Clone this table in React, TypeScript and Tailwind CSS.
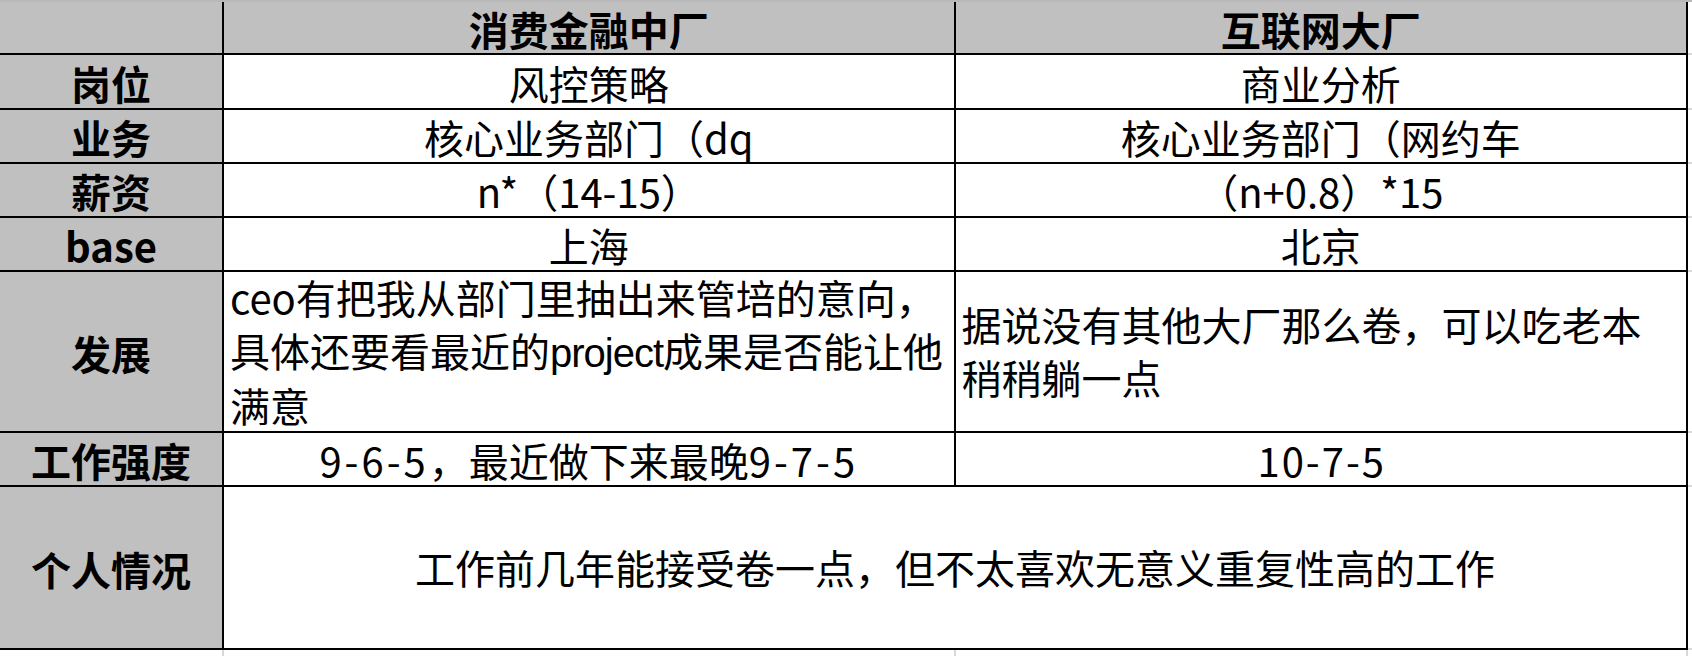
import React from "react";

const rows = "grid-rows-[51px_52.5px_52.5px_51.5px_52.5px_158.5px_52px_161.5px]";

function Label({ children }: { children?: React.ReactNode }) {
  return (
    <div className="bg-[#c0c0c0] flex items-center justify-center font-bold text-[40px] leading-none pt-[3px]">
      {children}
    </div>
  );
}

function Val({ children, head = false }: { children?: React.ReactNode; head?: boolean }) {
  return (
    <div
      className={
        head
          ? "bg-[#c0c0c0] flex items-center justify-center font-bold text-[40px] leading-none pt-[3px] whitespace-nowrap"
          : "bg-white flex items-center justify-center text-[40px] leading-none pt-[3px] whitespace-nowrap"
      }
    >
      {children}
    </div>
  );
}

export default function App() {
  return (
    <div className="w-[1692px] h-[656px] bg-white overflow-hidden text-black font-['Noto_Sans_CJK_SC','Noto_Sans',sans-serif]">
      <div className="h-[2px] bg-[#b8b8b8]" />
      <div className="flex">
        <div
          className={`grid grid-cols-[222px_729.5px_730.5px] ${rows} gap-[2px] bg-black border-r-2 border-b-2 border-black w-[1688px] shrink-0`}
        >
          <Label />
          <Val head>消费金融中厂</Val>
          <Val head>互联网大厂</Val>

          <Label>岗位</Label>
          <Val>风控策略</Val>
          <Val>商业分析</Val>

          <Label>业务</Label>
          <Val>核心业务部门（dq</Val>
          <Val>核心业务部门（网约车</Val>

          <Label>薪资</Label>
          <Val>n*（14-15）</Val>
          <Val>（n+0.8）*15</Val>

          <Label>base</Label>
          <Val>上海</Val>
          <Val>北京</Val>

          <Label>发展</Label>
          <div className="bg-white flex flex-col justify-center pl-[6px] text-[40px] leading-[52.5px] whitespace-nowrap">
            <div>ceo有把我从部门里抽出来管培的意向，</div>
            <div>
              具体还要看最近的
              <span className="font-['Liberation_Sans',sans-serif] tracking-[-1px]">project</span>
              成果是否能让他
            </div>
            <div>满意</div>
          </div>
          <div className="bg-white flex flex-col justify-center pl-[6px] text-[40px] leading-[53px] whitespace-nowrap">
            <div>据说没有其他大厂那么卷，可以吃老本</div>
            <div>稍稍躺一点</div>
          </div>

          <Label>工作强度</Label>
          <Val>
            <span className="tracking-[3px]">9-6-5</span>，最近做下来最晚
            <span className="tracking-[3px]">9-7-5</span>
          </Val>
          <Val>
            <span className="tracking-[2px] mr-[-2px]">10-7-5</span>
          </Val>

          <Label>个人情况</Label>
          <div className="col-span-2 bg-white flex items-center justify-center text-[40px] leading-none whitespace-nowrap">
            工作前几年能接受卷一点，但不太喜欢无意义重复性高的工作
          </div>
        </div>
        <div className={`grid ${rows} gap-y-[2px] bg-[#d9d9d9] w-[4px] pb-[2px]`}>
          <div className="bg-white" />
          <div className="bg-white" />
          <div className="bg-white" />
          <div className="bg-white" />
          <div className="bg-white" />
          <div className="bg-white" />
          <div className="bg-white" />
          <div className="bg-white" />
        </div>
      </div>
      <div className="flex h-[6px]">
        <div className="w-[222px] bg-white" />
        <div className="w-[2px] bg-[#d9d9d9]" />
        <div className="w-[729.5px] bg-white" />
        <div className="w-[2px] bg-[#d9d9d9]" />
        <div className="w-[730.5px] bg-white" />
        <div className="w-[2px] bg-[#d9d9d9]" />
        <div className="flex-1 bg-white" />
      </div>
    </div>
  );
}
